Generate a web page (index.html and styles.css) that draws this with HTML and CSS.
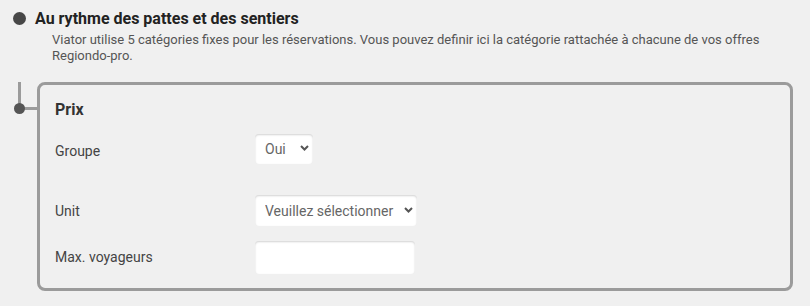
FILE: index.html
```html
<!DOCTYPE html>
<html lang="fr">
<head>
<meta charset="utf-8">
<title>Viator catégories</title>
<link rel="stylesheet" href="styles.css">
</head>
<body>
<section class="section">
  <div class="section-head">
    <span class="bullet"></span>
    <h2 class="section-title">Au rythme des pattes et des sentiers</h2>
  </div>
  <p class="section-desc">Viator utilise 5 catégories fixes pour les réservations. Vous pouvez definir ici la catégorie rattachée à chacune de vos offres Regiondo-pro.</p>

  <div class="tree-item">
    <span class="node-dot"></span>
    <div class="card">
      <h3 class="card-title">Prix</h3>

      <div class="row row-spaced">
        <label class="row-label label-low2">Groupe</label>
        <span class="select-wrap">
          <select class="select select-sm">
            <option>Oui</option>
            <option>Non</option>
          </select>
          <svg class="chevron" width="9" height="6" viewBox="0 0 9 6"><polyline points="1,1 4.5,4.5 8,1" fill="none" stroke="#555" stroke-width="2"/></svg>
        </span>
      </div>

      <div class="row">
        <label class="row-label label-low1">Unit</label>
        <span class="select-wrap">
          <select class="select select-lg">
            <option>Veuillez sélectionner</option>
          </select>
          <svg class="chevron" width="9" height="6" viewBox="0 0 9 6"><polyline points="1,1 4.5,4.5 8,1" fill="none" stroke="#555" stroke-width="2"/></svg>
        </span>
      </div>

      <div class="row row-last">
        <label class="row-label">Max. voyageurs</label>
        <input class="text-input" type="text">
      </div>
    </div>
  </div>
</section>
</body>
</html>
```

FILE: styles.css
```css
html, body {
  margin: 0;
  padding: 0;
  background: #f0f0f0;
}

body {
  font-family: Roboto, "Liberation Sans", Arial, sans-serif;
  color: #333;
}

.section {
  padding: 9px 17px 0 0;
}

.section-head {
  display: flex;
  align-items: center;
  gap: 9px;
  padding-left: 13px;
  height: 19px;
}

.bullet {
  width: 13px;
  height: 13px;
  border-radius: 50%;
  background: #474747;
  flex: none;
}

.section-title {
  margin: 0;
  font-size: 16px;
  line-height: 19px;
  font-weight: 700;
  color: #222;
}

.section-desc {
  margin: 4px 0 0 0;
  padding-left: 52px;
  font-size: 13px;
  line-height: 15.5px;
  color: #555;
}

.tree-item {
  position: relative;
  margin-top: 19px;
  padding-left: 37px;
}

.tree-item::before {
  content: "";
  position: absolute;
  left: 18px;
  top: 0;
  width: 3px;
  height: 27px;
  background: #9b9b9b;
}

.tree-item::after {
  content: "";
  position: absolute;
  left: 20px;
  top: 25px;
  width: 18px;
  height: 3px;
  background: #9b9b9b;
}

.node-dot {
  position: absolute;
  left: 14px;
  top: 21px;
  width: 11px;
  height: 11px;
  border-radius: 50%;
  background: #555;
  z-index: 1;
}

.card {
  border: 3px solid #9b9b9b;
  border-radius: 8px;
  padding: 15px 15px 14px 15px;
}

.card-title {
  margin: 0 0 15px 0;
  font-size: 16px;
  line-height: 19px;
  font-weight: 700;
  color: #333;
}

.row {
  display: flex;
  align-items: center;
  margin-bottom: 15px;
}

.row-spaced {
  margin-bottom: 31px;
}

.row-last {
  margin-bottom: 0;
}

.row-label {
  width: 200px;
  flex: none;
  font-size: 14px;
  line-height: 17px;
  color: #444;
}

.label-low2 {
  padding-top: 4px;
}

.label-low1 {
  padding-top: 2px;
}

.select-wrap {
  position: relative;
  display: inline-block;
}

.select {
  -webkit-appearance: none;
  appearance: none;
  display: block;
  height: 30px;
  margin: 0;
  padding: 0 20px 0 10px;
  border: none;
  border-radius: 4px;
  background: #fff;
  box-shadow: inset 0 1px 2px rgba(0, 0, 0, 0.18);
  font-family: Roboto, "Liberation Sans", Arial, sans-serif;
  font-size: 14px;
  color: #666;
}

.select-sm {
  width: 58px;
}

.select-lg {
  width: 162px;
  height: 31px;
}

.chevron {
  position: absolute;
  right: 4px;
  top: 50%;
  margin-top: -4px;
  pointer-events: none;
}

.text-input {
  display: block;
  width: 160px;
  height: 33px;
  box-sizing: border-box;
  margin: 0;
  padding: 0 10px;
  border: none;
  border-radius: 4px;
  background: #fff;
  box-shadow: inset 0 1px 2px rgba(0, 0, 0, 0.18);
  font-family: Roboto, "Liberation Sans", Arial, sans-serif;
  font-size: 14px;
  color: #666;
}
```
